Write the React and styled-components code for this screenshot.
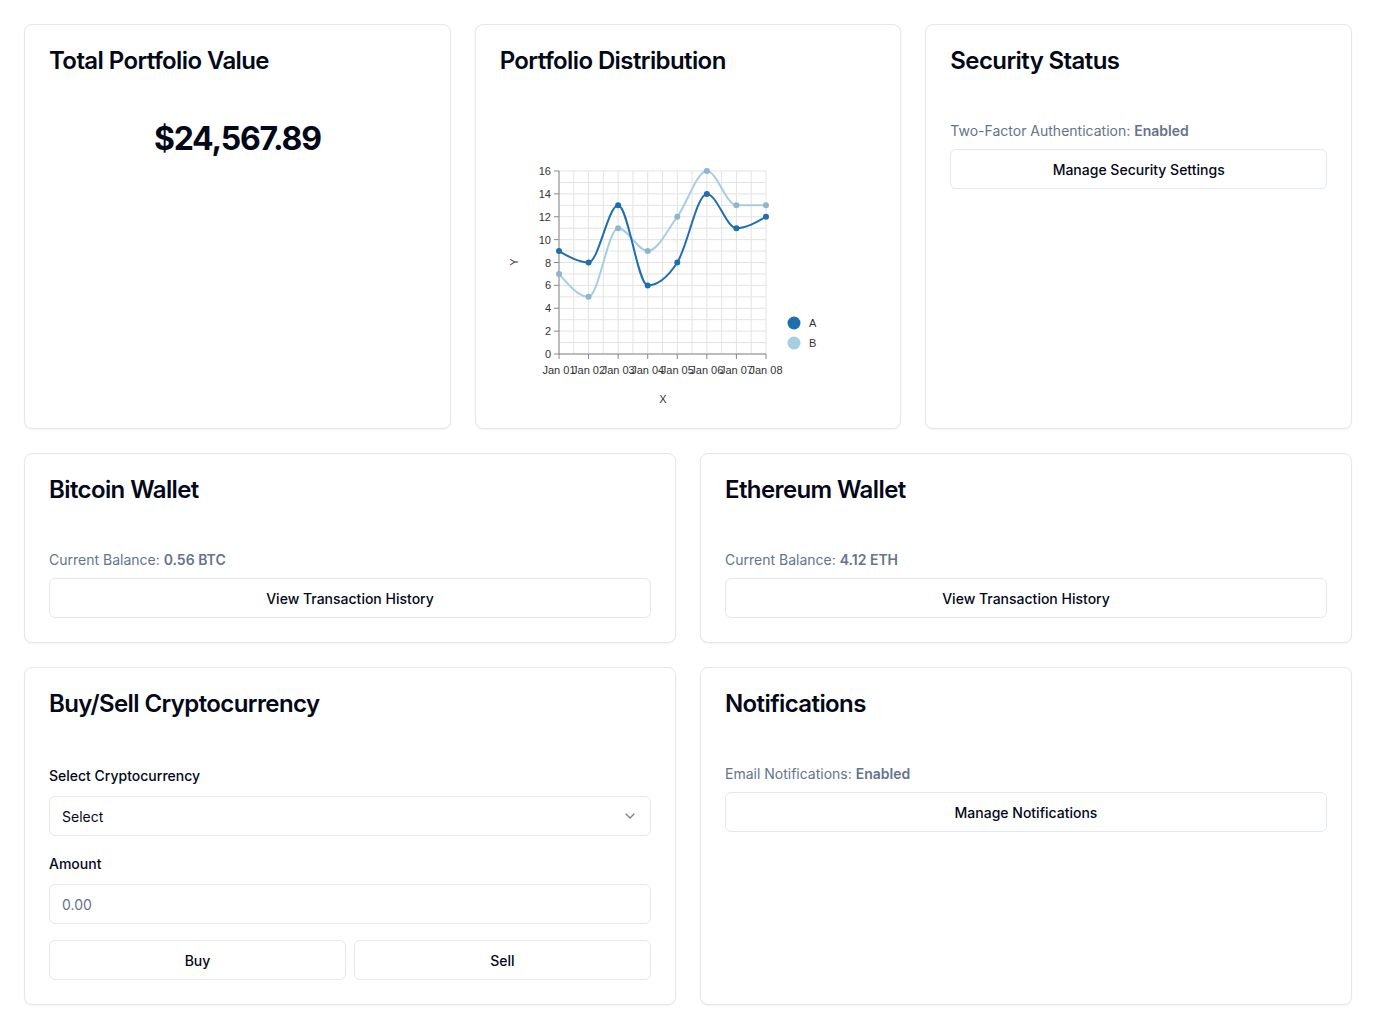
import React from 'react';
import styled, { createGlobalStyle } from 'styled-components';
import { ChevronDown } from 'lucide-react';

const GlobalStyle = createGlobalStyle`
  * { box-sizing: border-box; }
  body {
    margin: 0;
    background: #ffffff;
    font-family: Inter, "Noto Sans", sans-serif;
    color: #020817;
  }
`;

const Page = styled.main`
  padding: 24px;
  display: grid;
  grid-template-columns: repeat(6, minmax(0, 1fr));
  gap: 24px;
`;

const Card = styled.section`
  grid-column: span ${p => p.$span};
  border: 1px solid #e2e8f0;
  border-radius: 8px;
  background: #ffffff;
  box-shadow: 0 1px 2px rgba(0, 0, 0, 0.05);
  display: flex;
  flex-direction: column;
`;

const CardHeader = styled.header`
  padding: 24px;
`;

const CardTitle = styled.h3`
  margin: 0;
  font-size: 24px;
  line-height: 24px;
  font-weight: 600;
  letter-spacing: -0.025em;
`;

const CardContent = styled.div`
  padding: 24px;
  display: flex;
  flex-direction: column;
`;

const BigValue = styled.p`
  margin: 0;
  text-align: center;
  font-size: 32px;
  line-height: 36px;
  font-weight: 700;
  letter-spacing: -1.2px;
`;

const Muted = styled.p`
  margin: 0 0 8px;
  font-size: 14px;
  line-height: 20px;
  color: #64748b;

  strong {
    font-weight: 600;
  }
`;

const Button = styled.button`
  height: 40px;
  width: 100%;
  border: 1px solid #e2e8f0;
  border-radius: 6px;
  background: #ffffff;
  color: #020817;
  font-family: inherit;
  font-size: 14px;
  font-weight: 500;
  cursor: pointer;
  padding: 0 16px;
`;

const Field = styled.div`
  display: flex;
  flex-direction: column;
  gap: 8px;
  margin-bottom: 16px;
`;

const Label = styled.label`
  font-size: 14px;
  line-height: 24px;
  font-weight: 500;
`;

const SelectTrigger = styled.button`
  height: 40px;
  width: 100%;
  display: flex;
  align-items: center;
  justify-content: space-between;
  padding: 0 12px;
  border: 1px solid #e2e8f0;
  border-radius: 6px;
  background: #ffffff;
  font-family: inherit;
  font-size: 14px;
  color: #020817;

  svg {
    opacity: 0.5;
  }
`;

const Input = styled.input`
  height: 40px;
  width: 100%;
  padding: 0 12px;
  border: 1px solid #e2e8f0;
  border-radius: 6px;
  font-family: inherit;
  font-size: 14px;
  color: #020817;
  outline: none;

  &::placeholder {
    color: #64748b;
  }
`;

const ButtonRow = styled.div`
  display: grid;
  grid-template-columns: 1fr 1fr;
  gap: 8px;
`;

const ChartSvg = styled.svg`
  display: block;
  font-family: "Liberation Sans", Arial, sans-serif;
`;

/* ---------- chart ---------- */
const A = [9, 8, 13, 6, 8, 14, 11, 12];
const B = [7, 5, 11, 9, 12, 16, 13, 13];
const X0 = 59, X1 = 266, Y0 = 233, Y16 = 50;
const sx = i => X0 + (i * (X1 - X0)) / 7;
const sy = v => Y0 - (v * (Y0 - Y16)) / 16;

function monotonePath(xs, ys) {
  const n = xs.length;
  const s = [];
  for (let i = 0; i < n - 1; i++) s.push((ys[i + 1] - ys[i]) / (xs[i + 1] - xs[i]));
  const t = new Array(n).fill(0);
  for (let i = 1; i < n - 1; i++) {
    const h0 = xs[i] - xs[i - 1];
    const h1 = xs[i + 1] - xs[i];
    const s0 = s[i - 1], s1 = s[i];
    const p = (s0 * h1 + s1 * h0) / (h0 + h1);
    t[i] = (Math.sign(s0) + Math.sign(s1)) * Math.min(Math.abs(s0), Math.abs(s1), 0.5 * Math.abs(p)) || 0;
  }
  t[0] = (3 * s[0] - t[1]) / 2;
  t[n - 1] = (3 * s[n - 2] - t[n - 2]) / 2;
  let d = `M${xs[0]},${ys[0]}`;
  for (let i = 0; i < n - 1; i++) {
    const dx = (xs[i + 1] - xs[i]) / 3;
    d += `C${xs[i] + dx},${ys[i] + dx * t[i]},${xs[i + 1] - dx},${ys[i + 1] - dx * t[i + 1]},${xs[i + 1]},${ys[i + 1]}`;
  }
  return d;
}

function Chart() {
  const xs = A.map((_, i) => sx(i));
  const vGrid = Array.from({ length: 15 }, (_, k) => X0 + (k * (X1 - X0)) / 14);
  const hGrid = Array.from({ length: 17 }, (_, v) => sy(v));
  const yTicks = [0, 2, 4, 6, 8, 10, 12, 14, 16];
  return (
    <ChartSvg width="376" height="283" viewBox="0 0 376 283">
      <g stroke="#e3e3e3" strokeWidth="1">
        {vGrid.map((x, i) => <line key={'v' + i} x1={x} x2={x} y1={Y16} y2={Y0} />)}
        {hGrid.map((y, i) => <line key={'h' + i} x1={X0} x2={X1} y1={y} y2={y} />)}
      </g>
      <g stroke="#888" strokeWidth="1">
        <line x1={X0} x2={X1} y1={Y0} y2={Y0} />
        <line x1={X0} x2={X0} y1={Y16} y2={Y0} />
        {yTicks.map(v => <line key={'yt' + v} x1={X0 - 5} x2={X0} y1={sy(v)} y2={sy(v)} />)}
        {xs.map((x, i) => <line key={'xt' + i} x1={x} x2={x} y1={Y0} y2={Y0 + 5} />)}
      </g>
      <g fill="#333" fontSize="11">
        {yTicks.map(v => (
          <text key={'yl' + v} x={X0 - 8} y={sy(v) + 4} textAnchor="end">{v}</text>
        ))}
        {xs.map((x, i) => (
          <text key={'xl' + i} x={x} y={Y0 + 20} textAnchor="middle">{`Jan 0${i + 1}`}</text>
        ))}
      </g>
      <text x={163} y={282} fontSize="11" fill="#333" textAnchor="middle">X</text>
      <text x={0} y={0} fontSize="11" fill="#333" textAnchor="middle" transform="translate(18 141) rotate(-90)">Y</text>
      <path d={monotonePath(xs, B.map(sy))} fill="none" stroke="#a6cee3" strokeWidth="2" />
      {B.map((v, i) => <circle key={'b' + i} cx={xs[i]} cy={sy(v)} r="3" fill="#8fb5cc" />)}
      <path d={monotonePath(xs, A.map(sy))} fill="none" stroke="#1f6fae" strokeWidth="2" />
      {A.map((v, i) => <circle key={'a' + i} cx={xs[i]} cy={sy(v)} r="3" fill="#1f6fae" />)}
      <circle cx={294} cy={202} r="6.5" fill="#1f6fae" />
      <circle cx={294} cy={222} r="6.5" fill="#a6cee3" />
      <text x={309} y={206} fontSize="11" fill="#333">A</text>
      <text x={309} y={226} fontSize="11" fill="#333">B</text>
    </ChartSvg>
  );
}

export default function App() {
  return (
    <>
      <GlobalStyle />
      <Page>
        <Card $span={2}>
          <CardHeader><CardTitle>Total Portfolio Value</CardTitle></CardHeader>
          <CardContent>
            <BigValue>$24,567.89</BigValue>
          </CardContent>
        </Card>

        <Card $span={2}>
          <CardHeader><CardTitle>Portfolio Distribution</CardTitle></CardHeader>
          <CardContent>
            <Chart />
          </CardContent>
        </Card>

        <Card $span={2}>
          <CardHeader><CardTitle>Security Status</CardTitle></CardHeader>
          <CardContent>
            <Muted>Two-Factor Authentication: <strong>Enabled</strong></Muted>
            <Button>Manage Security Settings</Button>
          </CardContent>
        </Card>

        <Card $span={3}>
          <CardHeader><CardTitle>Bitcoin Wallet</CardTitle></CardHeader>
          <CardContent>
            <Muted>Current Balance: <strong>0.56 BTC</strong></Muted>
            <Button>View Transaction History</Button>
          </CardContent>
        </Card>

        <Card $span={3}>
          <CardHeader><CardTitle>Ethereum Wallet</CardTitle></CardHeader>
          <CardContent>
            <Muted>Current Balance: <strong>4.12 ETH</strong></Muted>
            <Button>View Transaction History</Button>
          </CardContent>
        </Card>

        <Card $span={3}>
          <CardHeader><CardTitle>Buy/Sell Cryptocurrency</CardTitle></CardHeader>
          <CardContent>
            <Field>
              <Label>Select Cryptocurrency</Label>
              <SelectTrigger type="button">
                <span>Select</span>
                <ChevronDown size={16} />
              </SelectTrigger>
            </Field>
            <Field>
              <Label>Amount</Label>
              <Input placeholder="0.00" />
            </Field>
            <ButtonRow>
              <Button>Buy</Button>
              <Button>Sell</Button>
            </ButtonRow>
          </CardContent>
        </Card>

        <Card $span={3}>
          <CardHeader><CardTitle>Notifications</CardTitle></CardHeader>
          <CardContent>
            <Muted>Email Notifications: <strong>Enabled</strong></Muted>
            <Button>Manage Notifications</Button>
          </CardContent>
        </Card>
      </Page>
    </>
  );
}
